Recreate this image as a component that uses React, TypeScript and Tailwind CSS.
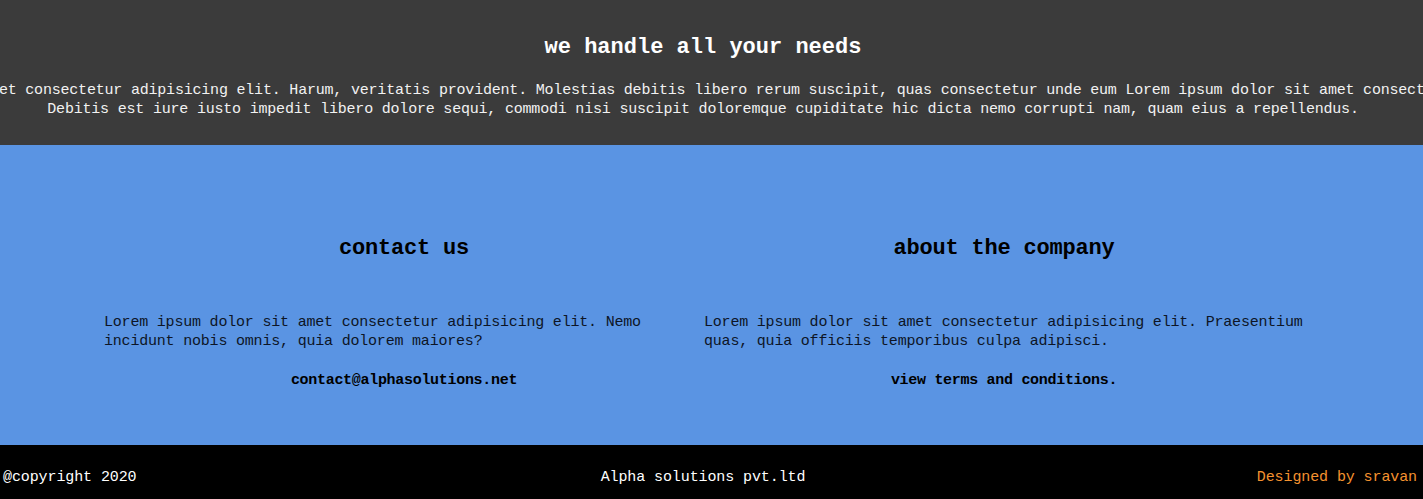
const mono = "font-['Liberation_Mono','DejaVu_Sans_Mono',monospace]"

const columns = [
  {
    title: 'contact us',
    text: 'Lorem ipsum dolor sit amet consectetur adipisicing elit. Nemo incidunt nobis omnis, quia dolorem maiores?',
    link: 'contact@alphasolutions.net',
  },
  {
    title: 'about the company',
    text: 'Lorem ipsum dolor sit amet consectetur adipisicing elit. Praesentium quas, quia officiis temporibus culpa adipisci.',
    link: 'view terms and conditions.',
  },
]

export default function App() {
  return (
    <div className={`${mono} w-full overflow-x-hidden`}>
      {/* Needs banner */}
      <section className="bg-[#3b3b3b] pt-[34px] pb-[26px] pr-[17px] flex flex-col items-center text-center">
        <h1 className="text-[22px] leading-[28px] font-bold text-white">we handle all your needs</h1>
        <p className="mt-[19px] flex flex-col items-center text-[15px] leading-[19px] tracking-[-0.2px] text-[#f2f2f2]">
          <span className="whitespace-nowrap">
            Lorem ipsum dolor sit amet consectetur adipisicing elit. Harum, veritatis provident. Molestias debitis libero rerum suscipit, quas consectetur unde eum Lorem ipsum dolor sit amet consectetur adipisicing elit.
          </span>
          <span>
            Debitis est iure iusto impedit libero dolore sequi, commodi nisi suscipit doloremque cupiditate hic dicta nemo corrupti nam, quam eius a repellendus.
          </span>
        </p>
      </section>

      {/* Contact / about */}
      <section className="bg-[#5a94e3] pt-[90px] pb-[55px] pr-[15px]">
        <div className="w-[1200px] mx-auto grid grid-cols-2">
          {columns.map((c) => (
            <div key={c.title} className="flex flex-col">
              <h2 className="text-center text-[22px] leading-[28px] tracking-[-0.2px] font-bold text-black">{c.title}</h2>
              <p className="mt-[50px] text-[15px] leading-[19px] tracking-[-0.2px] text-[#0d1526]">{c.text}</p>
              <a href="#" className="mt-[20px] text-center text-[15px] leading-[19px] tracking-[-0.3px] font-bold text-black">
                {c.link}
              </a>
            </div>
          ))}
        </div>
      </section>

      {/* Footer */}
      <footer className="bg-black h-[54px] pt-[23px] pl-[3px] pr-[6px] flex items-start text-[15px] leading-[19px] tracking-[-0.1px]">
        <span className="flex-1 text-white">@copyright 2020</span>
        <span className="mr-[14px] text-white">Alpha solutions pvt.ltd</span>
        <span className="flex-1 text-right text-[#f5922f]">Designed by sravan</span>
      </footer>
    </div>
  )
}
